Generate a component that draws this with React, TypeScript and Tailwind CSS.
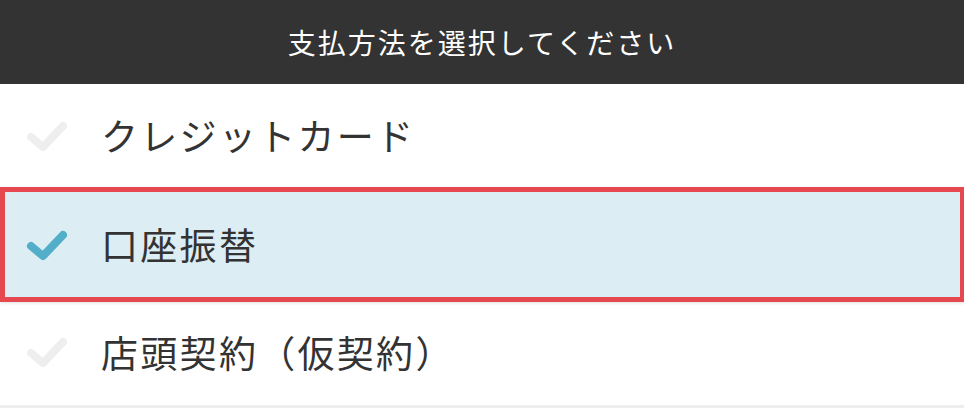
import { useState } from 'react'

const methods = ['クレジットカード', '口座振替', '店頭契約（仮契約）']

function Check({ active }: { active: boolean }) {
  return (
    <svg width="44" height="32" viewBox="0 0 44 32" className="shrink-0">
      <polyline
        points="7,17 19,27 39,6"
        fill="none"
        stroke={active ? '#52aec9' : '#eeeeee'}
        strokeWidth="8"
        strokeLinecap="round"
        strokeLinejoin="round"
      />
    </svg>
  )
}

export default function App() {
  const [selected, setSelected] = useState(1)

  return (
    <div className="w-[964px] h-[408px] bg-white overflow-hidden font-['Noto_Sans_CJK_JP','Noto_Sans',sans-serif]">
      <div className="h-[84px] bg-[#333333] flex items-center justify-center">
        <h1 className="text-[28px] text-white tracking-[2px] leading-none">
          支払方法を選択してください
        </h1>
      </div>
      {methods.map((m, i) => {
        const active = i === selected
        return (
          <button
            key={m}
            onClick={() => setSelected(i)}
            className={
              active
                ? 'w-full h-[115px] flex items-center pl-[19px] bg-[#dcedf4] border-[5px] border-[#e5484f] border-r-4 shadow-[0_1px_3px_rgba(0,0,0,0.12)] text-left'
                : i === methods.length - 1
                  ? 'w-full h-[106px] flex items-center pl-6 border-b-[3px] border-[#eeeeee] text-left pb-[3px]'
                  : 'w-full h-[103px] flex items-center pl-6 text-left'
            }
          >
            <Check active={active} />
            <span className="ml-[33px] text-[37px] text-[#333333] tracking-[2.3px] leading-none">
              {m}
            </span>
          </button>
        )
      })}
    </div>
  )
}
